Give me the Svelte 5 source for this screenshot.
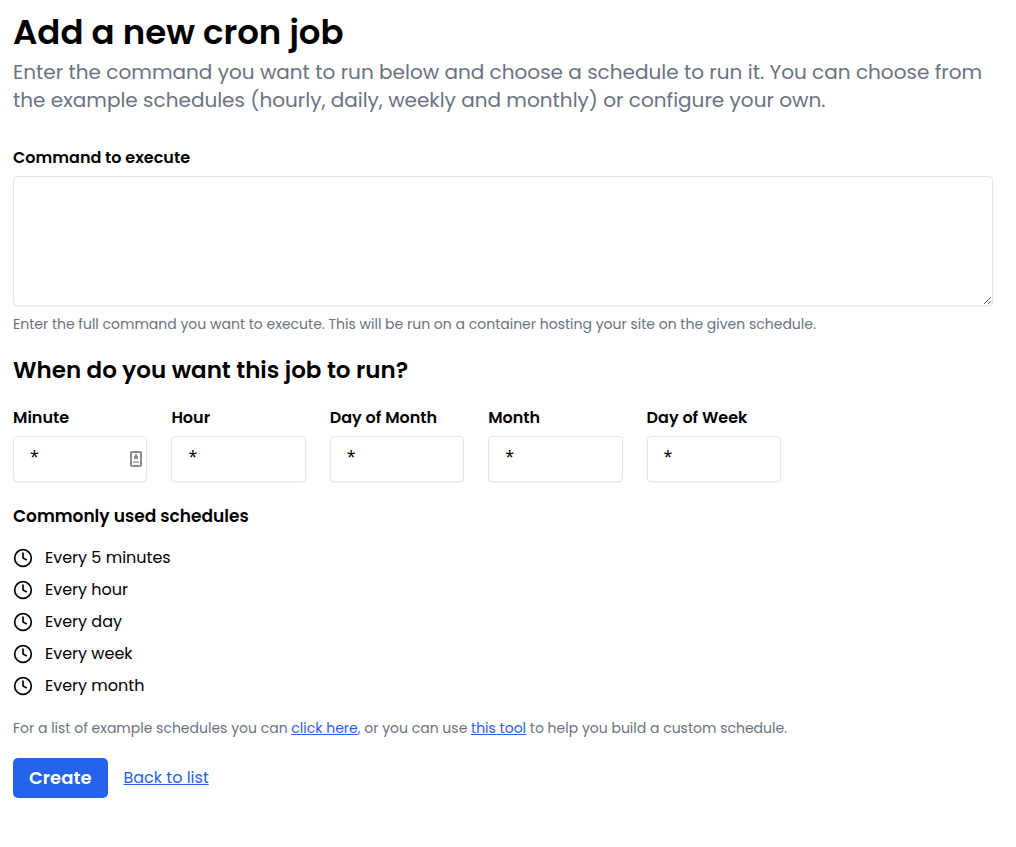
<script>
	let command = $state("");

	let fields = $state([
		{ id: "minute", label: "Minute", value: "*" },
		{ id: "hour", label: "Hour", value: "*" },
		{ id: "day-of-month", label: "Day of Month", value: "*" },
		{ id: "month", label: "Month", value: "*" },
		{ id: "day-of-week", label: "Day of Week", value: "*" }
	]);

	const schedules = [
		{ label: "Every 5 minutes", cron: "*/5 * * * *" },
		{ label: "Every hour", cron: "0 * * * *" },
		{ label: "Every day", cron: "0 0 * * *" },
		{ label: "Every week", cron: "0 0 * * 0" },
		{ label: "Every month", cron: "0 0 1 * *" }
	];

	function applySchedule(cron) {
		cron.split(" ").forEach((part, i) => (fields[i].value = part));
	}
</script>

<main>
	<header>
		<h1>Add a new cron job</h1>
		<p class="lead">
			Enter the command you want to run below and choose a schedule to run it. You can choose from
			the example schedules (hourly, daily, weekly and monthly) or configure your own.
		</p>
	</header>

	<form onsubmit={(e) => e.preventDefault()}>
		<label for="command">Command to execute</label>
		<textarea id="command" bind:value={command}></textarea>
		<p class="hint">
			Enter the full command you want to execute. This will be run on a container hosting your site
			on the given schedule.
		</p>

		<h2>When do you want this job to run?</h2>
		<div class="fields">
			{#each fields as field, i (field.id)}
				<div class="field">
					<label for={field.id}>{field.label}</label>
					<div class="control">
						<input id={field.id} type="text" bind:value={field.value} />
						{#if i === 0}
							<!-- autofill badge -->
							<svg class="badge" viewBox="0 0 12 16" aria-hidden="true">
								<rect x="1" y="1" width="10" height="14" rx="1" fill="#fff" stroke="#8c8c8c" stroke-width="2" />
								<path d="M5 3h2v2h1v3H4V5h1z" fill="#8c8c8c" />
								<path d="M3 10h6v2H3z" fill="#b4b4b4" />
							</svg>
						{/if}
					</div>
				</div>
			{/each}
		</div>

		<h3>Commonly used schedules</h3>
		<ul>
			{#each schedules as schedule}
				<li>
					<button type="button" class="schedule" onclick={() => applySchedule(schedule.cron)}>
						<svg viewBox="0 0 24 24" aria-hidden="true">
							<circle cx="12" cy="12" r="10" />
							<path d="M12 6v6l4 2" />
						</svg>
						{schedule.label}
					</button>
				</li>
			{/each}
		</ul>

		<p class="hint">
			For a list of example schedules you can <a href="#examples">click here</a>, or you can use
			<a href="#tool">this tool</a> to help you build a custom schedule.
		</p>

		<div class="actions">
			<button type="submit" class="create">Create</button>
			<a href="#list">Back to list</a>
		</div>
	</form>
</main>

<style>
	:global(body) {
		background: #fff;
	}

	main {
		padding: 12px 23px 48px 13px;
		font-family: Poppins, Inter, sans-serif;
		font-size: 16px;
		line-height: 24px;
		color: #000;
	}

	h1,
	h2,
	h3,
	p,
	ul {
		margin: 0;
	}

	h1 {
		font-size: 34px;
		line-height: 40px;
		font-weight: 600;
	}

	.lead {
		margin-top: 6px;
		font-size: 20px;
		line-height: 28px;
		color: #6b7280;
	}

	form {
		margin-top: 32px;
	}

	label {
		display: block;
		font-weight: 600;
	}

	textarea,
	input {
		display: block;
		box-sizing: border-box;
		width: 100%;
		border: 1px solid #e5e7eb;
		border-radius: 4px;
		box-shadow: 0 1px 2px rgba(0, 0, 0, 0.05);
		background: #fff;
		font: inherit;
		color: inherit;
	}

	textarea {
		height: 130px;
		margin-top: 6px;
		padding: 8px 16px;
		resize: vertical;
	}

	input {
		padding: 7px 16px 13px;
		font-family: "Noto Sans", sans-serif;
	}

	.hint {
		margin-top: 8px;
		font-size: 14px;
		line-height: 20px;
		color: #6b7280;
	}

	h2 {
		margin-top: 20px;
		font-size: 23px;
		line-height: 32px;
		font-weight: 600;
	}

	.fields {
		display: grid;
		grid-template-columns: repeat(5, 1fr);
		gap: 24px;
		max-width: 768px;
		margin-top: 20px;
	}

	.control {
		position: relative;
		margin-top: 6px;
	}

	.badge {
		position: absolute;
		top: 15px;
		right: 5px;
		width: 12px;
		height: 16px;
	}

	h3 {
		margin-top: 20px;
		font-size: 17px;
		line-height: 28px;
		font-weight: 600;
	}

	ul {
		display: grid;
		gap: 8px;
		margin-top: 16px;
		padding: 0;
		list-style: none;
	}

	.schedule {
		display: flex;
		align-items: center;
		gap: 12px;
		padding: 0;
		border: 0;
		background: none;
		font: inherit;
		color: inherit;
		cursor: pointer;
	}

	.schedule svg {
		width: 20px;
		height: 20px;
		fill: none;
		stroke: currentColor;
		stroke-width: 2;
		stroke-linecap: round;
		stroke-linejoin: round;
	}

	ul + .hint {
		margin-top: 20px;
	}

	a {
		color: #2563eb;
		text-decoration: underline;
	}

	.actions {
		display: flex;
		align-items: center;
		gap: 16px;
		margin-top: 20px;
	}

	.create {
		padding: 6px 16px;
		border: 0;
		border-radius: 5px;
		background: #2563eb;
		font: inherit;
		font-size: 18px;
		line-height: 28px;
		font-weight: 600;
		color: #fff;
		cursor: pointer;
	}
</style>
